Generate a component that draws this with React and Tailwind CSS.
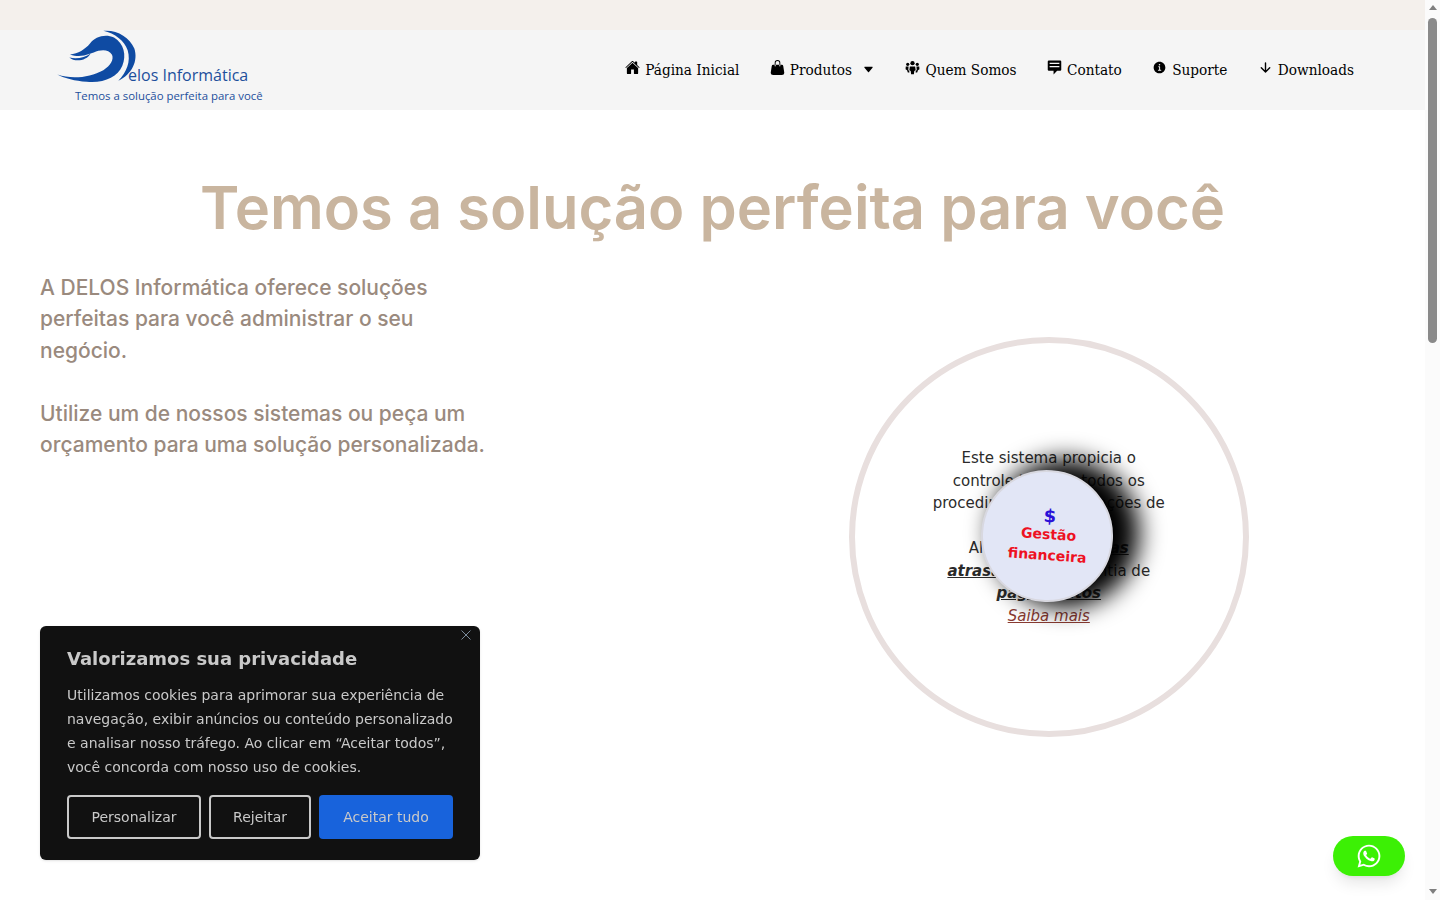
import React from "react";
import { IoHome, IoInformationCircle, IoArrowDown, IoCaretDown } from "react-icons/io5";
import { BsFillHandbagFill } from "react-icons/bs";
import { FaWhatsapp } from "react-icons/fa";

const PeopleIcon = ({ className }) => (
  <svg className={className} viewBox="0 0 16 16" fill="currentColor">
    <circle cx="8" cy="3.4" r="2.3" />
    <circle cx="2.9" cy="4.6" r="1.7" />
    <circle cx="13.1" cy="4.6" r="1.7" />
    <path d="M5.2 6.8h5.6l.6 4-1.5 1-.4 3.4H6.5l-.4-3.4-1.5-1z" />
    <path d="M.8 7h3l-.3 3.6 1 1 .2 1.6H3l-.8-2.4-1.6-1z" />
    <path d="M15.2 7h-3l.3 3.6-1 1-.2 1.6H13l.8-2.4 1.6-1z" />
  </svg>
);

const ChatIcon = ({ className }) => (
  <svg className={className} viewBox="0 0 16 16" fill="currentColor">
    <path d="M2 .5h12a1.2 1.2 0 0 1 1.2 1.2v8.6a1.2 1.2 0 0 1-1.2 1.2h-3.2L7 15.5v-4H2A1.2 1.2 0 0 1 .8 10.300V1.700A1.200 1.200 0 0 1 2 .5z" />
    <path d="M2.800 3.700h10.400M2.800 7h10.400" stroke="#f5f5f5" strokeWidth="1.300" />
  </svg>
);

const navItems = [
  { label: "Página Inicial", icon: IoHome },
  { label: "Produtos", icon: BsFillHandbagFill, caret: true },
  { label: "Quem Somos", icon: PeopleIcon },
  { label: "Contato", icon: ChatIcon },
  { label: "Suporte", icon: IoInformationCircle },
  { label: "Downloads", icon: IoArrowDown },
];

function Logo() {
  return (
    <div className="relative h-[80px] w-[240px] font-['Open_Sans',sans-serif] text-[#1d4f9c]">
      <svg className="absolute left-0 top-[-10px]" width="100" height="67" viewBox="0 0 300 200">
        <path fill="#0f4ba3" d="M52 163 C95 178 150 172 190 150 C212 136 222 118 216 104 C208 90 192 88 175 92 C150 100 125 115 90 103 C115 100 135 88 150 70 C165 50 195 40 222 52 C252 70 260 105 247 137 C232 172 190 190 140 185 C105 182 75 175 52 163 Z" />
        <path fill="#0f4ba3" d="M88 112 C110 118 135 112 152 100 C140 122 105 127 88 112 Z" />
        <path fill="#0f4ba3" d="M190 32 C230 28 268 50 283 85 C295 122 276 162 235 182 C260 155 273 125 263 90 C253 62 225 40 190 32 Z" />
      </svg>
      <span className="absolute left-[88px] top-[34px] text-[16px] leading-[22px]">elos Informática</span>
      <span className="absolute left-[35px] top-[58px] text-[11.4px] leading-[16px]">Temos a solução perfeita para você</span>
    </div>
  );
}

function Header() {
  return (
    <header>
      <div className="h-[30px] bg-[#f4f0ec]" />
      <div className="flex h-[80px] items-center justify-between bg-[#f5f5f5] pl-[40px] pr-[71px]">
        <Logo />
        <nav className="flex items-center gap-[30.4px] font-['DejaVu_Serif',serif] text-[15.2px] text-black [font-stretch:condensed]">
          {navItems.map((item) => (
            <a key={item.label} className="flex items-center">
              <item.icon className="mb-[5px] mr-[5px] h-[15px] w-[15px]" />
              <span>{item.label}</span>
              {item.caret && <IoCaretDown className="ml-[10px] h-[13px] w-[13px]" />}
            </a>
          ))}
        </nav>
      </div>
    </header>
  );
}

function ProductCircle() {
  return (
    <div className="relative flex h-[400px] w-[400px] items-center justify-center rounded-full border-[6px] border-[#e8dfde] font-['DejaVu_Sans',sans-serif] text-[15px]">
      <div className="text-center leading-[22.5px] text-[#2b2b2b]">
        <p>Este sistema propicia o<br />controle total de todos os<br />procedimentos e operações de</p>
        <br />
        <p>
          Alertas sobre <b className="italic underline">contas</b><br />
          <b className="italic underline">atrasadas</b> e a garantia de<br />
          <b className="italic underline">pagamentos</b>
        </p>
        <a className="italic text-[#8a3b32] underline">Saiba mais</a>
      </div>
      <div className="absolute left-[126px] top-[127px] flex h-[132px] w-[132px] rotate-[4deg] flex-col items-center justify-center rounded-full border-2 border-[#d8d8e0] bg-[#e2e6f6] pl-[3px] pt-[1px] text-center font-bold shadow-[18px_-4px_24px_8px_#000]">
        <span className="text-[18px] leading-[16px] text-[#2a10d8]">$</span>
        <span className="text-[14px] leading-[21px] text-[#ee1122]">Gestão<br />financeira</span>
      </div>
    </div>
  );
}

function CookieBox() {
  return (
    <div className="fixed bottom-[40px] left-[40px] w-[440px] rounded-md bg-[#111] px-[27px] pb-[21px] pt-[21px] font-['DejaVu_Sans',sans-serif] text-[#c9c9c9] shadow-sm">
      <svg className="absolute right-[9px] top-[4px]" width="10" height="10" viewBox="0 0 10 10" stroke="#7a8a9a" fill="none">
        <path d="M0.5 0.5 L9.5 9.5 M9.5 0.5 L0.5 9.5" />
      </svg>
      <h2 className="text-[18px] font-bold leading-[24px]">Valorizamos sua privacidade</h2>
      <p className="mt-[12px] text-[14px] leading-[24px]">
        Utilizamos cookies para aprimorar sua experiência de navegação, exibir anúncios ou conteúdo personalizado e analisar nosso tráfego. Ao clicar em “Aceitar todos”, você concorda com nosso uso de cookies.
      </p>
      <div className="mt-[16px] flex gap-[8px] text-[14px]">
        <button className="h-[44px] w-[134px] rounded-sm border-2 border-[#c9c9c9]">Personalizar</button>
        <button className="h-[44px] w-[102px] rounded-sm border-2 border-[#c9c9c9]">Rejeitar</button>
        <button className="h-[44px] w-[134px] rounded-sm bg-[#1863dc]">Aceitar tudo</button>
      </div>
    </div>
  );
}

function ScrollBar() {
  return (
    <div className="flex w-[15px] flex-col items-center bg-[#fbfbfb]">
      <div className="mt-[5px] h-0 w-0 border-x-[4px] border-b-[5px] border-x-transparent border-b-[#7f7f7f]" />
      <div className="mt-[8px] h-[325px] w-[9px] rounded-full bg-[#8a8a8a]" />
      <div className="mt-auto mb-[6px] h-0 w-0 border-x-[4px] border-t-[5px] border-x-transparent border-t-[#7f7f7f]" />
    </div>
  );
}

export default function App() {
  return (
    <div className="flex h-screen overflow-hidden bg-white">
      <div className="min-w-0 flex-1">
        <Header />
        <main className="px-[40px]">
          <h1 className="mb-[1px] mt-[59px] text-center font-['Inter',sans-serif] text-[59.7px] font-semibold leading-[76px] text-[#c9b59f]">
            Temos a solução perfeita para você
          </h1>
          <div className="grid grid-cols-2">
            <div className="mt-[25.7px] w-[460px] font-['Inter',sans-serif] text-[21px] font-medium leading-[31.5px] text-[#9a8a7e]">
              <p>A DELOS Informática oferece soluções perfeitas para você administrar o seu negócio.</p>
              <br />
              <p>Utilize um de nossos sistemas ou peça um orçamento para uma solução personalizada.</p>
            </div>
            <div className="mt-[91px] flex justify-center">
              <ProductCircle />
            </div>
          </div>
        </main>
      </div>
      <ScrollBar />
      <CookieBox />
      <a className="fixed bottom-[24px] right-[35px] flex h-[40px] w-[72px] items-center justify-center rounded-full bg-[#3cf005] text-white shadow-lg">
        <FaWhatsapp className="h-[26px] w-[26px]" />
      </a>
    </div>
  );
}
